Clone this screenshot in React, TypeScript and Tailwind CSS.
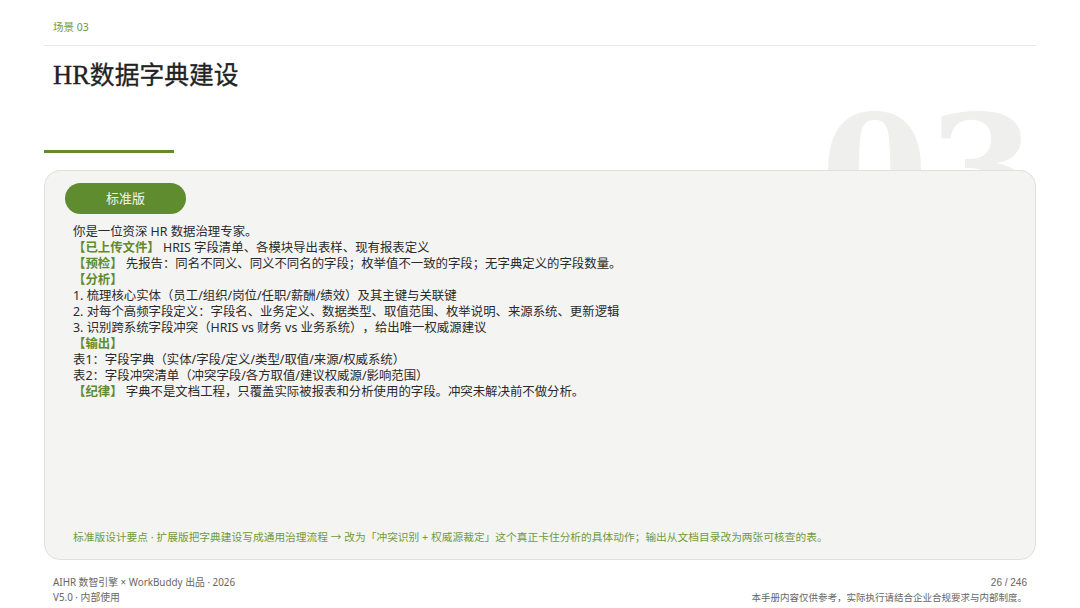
const sans = "font-['Noto_Sans','Noto_Sans_CJK_SC',sans-serif]";

function Tag({ children }: { children: string }) {
  return <span className="font-bold text-[#5f8c2e]">{children}</span>;
}

export default function App() {
  return (
    <div className={`relative w-[1080px] h-[608px] overflow-hidden bg-white px-[44px] [text-spacing-trim:space-all] ${sans}`}>
      {/* big chapter number sits behind the card */}
      <div className="absolute left-[821px] top-[94px] font-['DejaVu_Serif',serif] text-[154px] leading-none font-bold text-[#efefed] select-none">
        03
      </div>

      <header className="relative h-[46px] border-b border-[#e8e8e6] pl-[9px] pt-[19px] text-[10.5px] leading-[16px] text-[#6f9a3e]">
        场景 03
      </header>

      <h1 className="relative pl-[9px] pt-[11px] h-[104px] font-['Liberation_Serif','Noto_Sans_CJK_SC',serif] text-[26.5px] leading-[36px] font-normal text-[#222222] [-webkit-text-stroke:0.3px_#222222]">
        HR<span className="text-[24.8px]">数据字典建设</span>
      </h1>

      <div className="relative w-[130px] h-[3px] bg-[#5f8c2e]" />

      <section className="relative mt-[17px] h-[390px] rounded-[16px] border-[1.5px] border-[#e0e0de] bg-[#f4f4f2] px-[20px] pt-[12px] flex flex-col">
        <div className="w-[121px] h-[31px] rounded-full bg-[#5f8c2e] flex items-center justify-center text-[13px] text-[#f4f6ee]">
          标准版
        </div>

        <div className="mt-[10px] pl-[8px] text-[12.4px] leading-[16px] text-[#2a2a2a]">
          <p>你是一位资深 HR 数据治理专家。</p>
          <p><Tag>【已上传文件】</Tag> HRIS 字段清单、各模块导出表样、现有报表定义</p>
          <p><Tag>【预检】</Tag> 先报告：同名不同义、同义不同名的字段；枚举值不一致的字段；无字典定义的字段数量。</p>
          <p><Tag>【分析】</Tag></p>
          <p>1. 梳理核心实体（员工/组织/岗位/任职/薪酬/绩效）及其主键与关联键</p>
          <p>2. 对每个高频字段定义：字段名、业务定义、数据类型、取值范围、枚举说明、来源系统、更新逻辑</p>
          <p>3. 识别跨系统字段冲突（HRIS vs 财务 vs 业务系统），给出唯一权威源建议</p>
          <p><Tag>【输出】</Tag></p>
          <p>表1：字段字典（实体/字段/定义/类型/取值/来源/权威系统）</p>
          <p>表2：字段冲突清单（冲突字段/各方取值/建议权威源/影响范围）</p>
          <p><Tag>【纪律】</Tag> 字典不是文档工程，只覆盖实际被报表和分析使用的字段。冲突未解决前不做分析。</p>
        </div>

        <p className="mt-auto mb-[14px] pl-[8px] text-[10.73px] leading-[16px] text-[#6f9a3e]">
          标准版设计要点 · 扩展版把字典建设写成通用治理流程 → 改为「冲突识别 + 权威源裁定」这个真正卡住分析的具体动作；输出从文档目录改为两张可核查的表。
        </p>
      </section>

      <footer className="relative flex justify-between pl-[9px] pr-[9px] pt-[15px] text-[9.5px] leading-[15px] text-[#666666]">
        <div>
          <p className="text-[9.85px]">AIHR 数智引擎 × WorkBuddy 出品 · 2026</p>
          <p className="text-[9.85px]">V5.0 · 内部使用</p>
        </div>
        <div className="text-right">
          <p className="font-['Liberation_Sans',sans-serif] text-[10px]">26 / 246</p>
          <p>本手册内容仅供参考，实际执行请结合企业合规要求与内部制度。</p>
        </div>
      </footer>
    </div>
  );
}
